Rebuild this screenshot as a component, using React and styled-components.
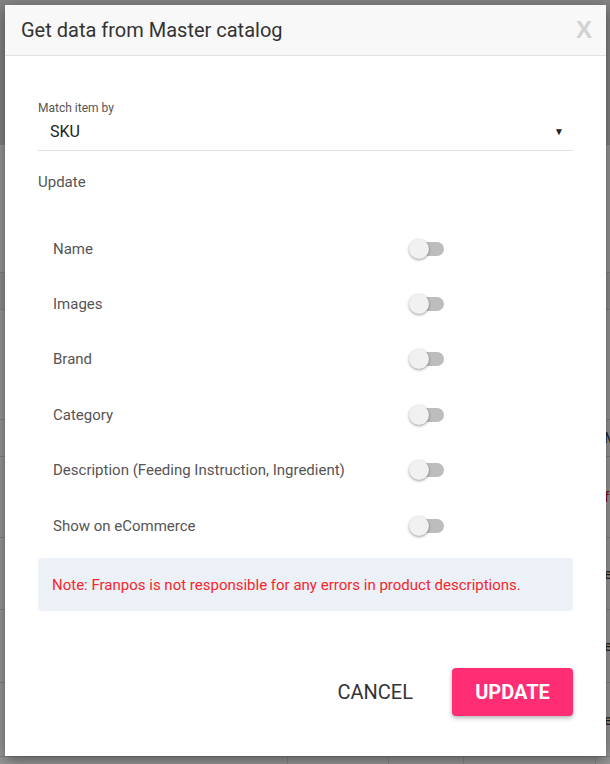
import React from "react";
import styled, { createGlobalStyle } from "styled-components";

const GlobalStyle = createGlobalStyle`
  html, body {
    margin: 0;
    padding: 0;
    width: 610px;
    height: 764px;
    overflow: hidden;
    font-family: Roboto, "Liberation Sans", Arial, sans-serif;
  }
  * { box-sizing: border-box; }
`;

const Page = styled.div`
  position: relative;
  width: 610px;
  height: 764px;
  background: #fff;
  overflow: hidden;
`;

const TopBand = styled.div`
  height: 145px;
  background: #dcdcdc;
`;

const TableRow = styled.div`
  display: flex;
  height: ${(p) => p.$h}px;
  background: ${(p) => (p.$shade ? "#f0f0f0" : "#fff")};
  border-bottom: 1px solid #dadada;
`;

const Cell = styled.div`
  width: ${(p) => p.$w}px;
  flex: none;
  border-right: 1px solid #e4e4e4;
  display: flex;
  align-items: center;
  padding-left: 8px;
  font-size: 15px;
  color: ${(p) => p.$color || "#333"};
  white-space: nowrap;
`;

const Overlay = styled.div`
  position: absolute;
  inset: 0;
  background: rgba(0, 0, 0, 0.4);
  padding: 5px 4px 8px 5px;
  display: flex;
`;

const Dialog = styled.div`
  width: 601px;
  height: 751px;
  background: #fff;
  box-shadow: 0 4px 14px rgba(0, 0, 0, 0.45);
  display: flex;
  flex-direction: column;
`;

const Header = styled.div`
  height: 51px;
  flex: none;
  background: #f8f8f8;
  border-bottom: 1px solid #e2e2e2;
  display: flex;
  align-items: center;
  justify-content: space-between;
  padding: 0 14px 0 16px;
`;

const Title = styled.h2`
  margin: 0;
  font-size: 20px;
  font-weight: 400;
  color: #333;
`;

const Close = styled.span`
  font-family: "Liberation Sans", Arial, sans-serif;
  font-size: 24px;
  font-weight: 700;
  color: #d2d2d2;
`;

const Body = styled.div`
  flex: 1;
  display: flex;
  flex-direction: column;
  padding: 45px 33px 0 33px;
`;

const FieldLabel = styled.div`
  font-size: 12px;
  line-height: 14px;
  color: #555;
`;

const Select = styled.div`
  height: 36px;
  padding: 0 9px 2px 12px;
  display: flex;
  align-items: center;
  justify-content: space-between;
  border-bottom: 1px solid #e0e0e0;
  font-size: 16px;
  color: #222;
`;

const Caret = styled.span`
  font-size: 10px;
  color: #222;
`;

const SectionTitle = styled.div`
  margin-top: 22px;
  font-size: 15px;
  line-height: 18px;
  color: #555;
`;

const List = styled.div`
  margin-top: 30px;
  display: flex;
  flex-direction: column;
`;

const Row = styled.div`
  height: 55.4px;
  display: flex;
  align-items: center;
  padding-left: 15px;
`;

const RowLabel = styled.span`
  width: 356px;
  font-size: 15px;
  color: #555;
`;

const Switch = styled.span`
  position: relative;
  width: 35px;
  height: 20px;
  display: inline-block;
`;

const Track = styled.span`
  position: absolute;
  right: 0;
  top: 3px;
  width: 26px;
  height: 14px;
  border-radius: 7px;
  background: #bdbdbd;
`;

const Thumb = styled.span`
  position: absolute;
  left: 0;
  top: 0;
  width: 20px;
  height: 20px;
  border-radius: 50%;
  background: #f1f1f1;
  box-shadow: 0 1px 3px rgba(0, 0, 0, 0.4);
`;

const Note = styled.div`
  margin-top: 5px;
  height: 53px;
  border-radius: 4px;
  background: #ecf0f7;
  display: flex;
  align-items: center;
  padding: 0 14px;
  font-size: 15px;
  color: #f7262b;
`;

const Footer = styled.div`
  margin-top: auto;
  padding-bottom: 40px;
  display: flex;
  justify-content: flex-end;
  align-items: center;
  gap: 23px;
`;

const Button = styled.button`
  height: 48px;
  border: none;
  border-radius: 4px;
  font-family: Roboto, "Liberation Sans", Arial, sans-serif;
  font-size: 20px;
  cursor: pointer;
  padding: 0 16px;
  background: ${(p) => (p.$primary ? "#ff2d73" : "transparent")};
  color: ${(p) => (p.$primary ? "#fff" : "#333")};
  font-weight: ${(p) => (p.$primary ? 700 : 400)};
  width: ${(p) => (p.$primary ? "121px" : "auto")};
  box-shadow: ${(p) => (p.$primary ? "0 2px 4px rgba(0,0,0,0.3)" : "none")};
`;

const bgRows = [
  { h: 128, shade: false },
  { h: 37, shade: true },
  { h: 110, shade: false },
  { h: 37, shade: false, text: "Mg" },
  { h: 81, shade: false, text: "ff", red: true },
  { h: 72, shade: false, text: "ee" },
  { h: 73, shade: false, text: "ee" },
  { h: 74, shade: false, text: "ee" },
  { h: 40, shade: false },
];

const fields = [
  "Name",
  "Images",
  "Brand",
  "Category",
  "Description (Feeding Instruction, Ingredient)",
  "Show on eCommerce",
];

function Toggle() {
  return (
    <Switch>
      <Track />
      <Thumb />
    </Switch>
  );
}

export default function App() {
  return (
    <Page>
      <GlobalStyle />
      <TopBand />
      {bgRows.map((r, i) => (
        <TableRow key={i} $h={r.h} $shade={r.shade}>
          <Cell $w={288} />
          <Cell $w={101} />
          <Cell $w={75} />
          <Cell $w={132} />
          <Cell $w={60} $color={r.red ? "#d00" : "#333"}>
            {r.text || ""}
          </Cell>
        </TableRow>
      ))}
      <Overlay>
        <Dialog>
          <Header>
            <Title>Get data from Master catalog</Title>
            <Close>X</Close>
          </Header>
          <Body>
            <FieldLabel>Match item by</FieldLabel>
            <Select>
              <span>SKU</span>
              <Caret>▼</Caret>
            </Select>
            <SectionTitle>Update</SectionTitle>
            <List>
              {fields.map((f) => (
                <Row key={f}>
                  <RowLabel>{f}</RowLabel>
                  <Toggle />
                </Row>
              ))}
            </List>
            <Note>
              Note: Franpos is not responsible for any errors in product
              descriptions.
            </Note>
            <Footer>
              <Button>CANCEL</Button>
              <Button $primary>UPDATE</Button>
            </Footer>
          </Body>
        </Dialog>
      </Overlay>
    </Page>
  );
}
